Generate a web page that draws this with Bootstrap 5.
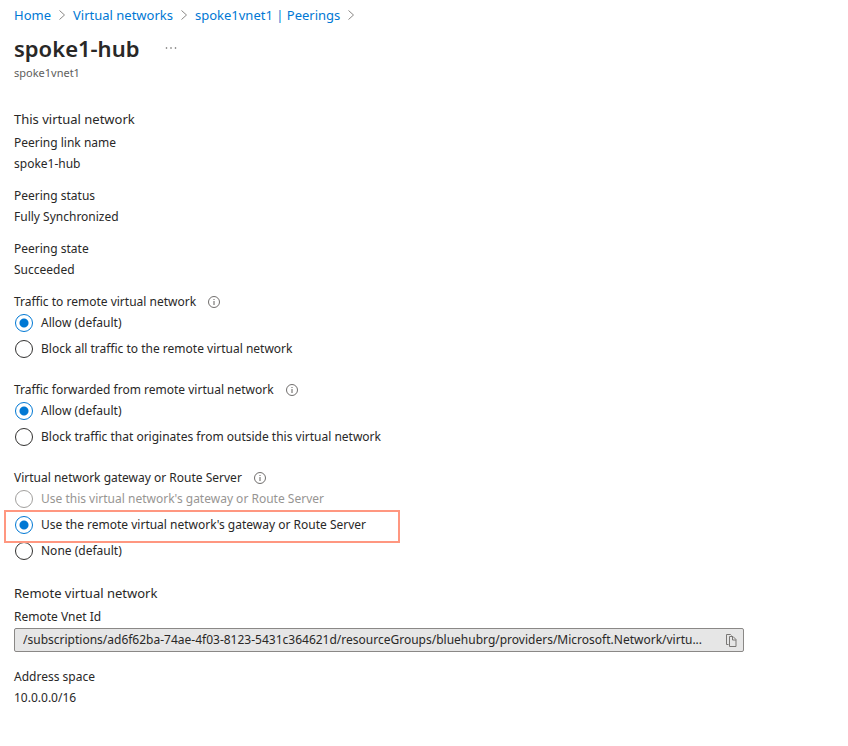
<!DOCTYPE html>
<html lang="en">
<head>
<meta charset="utf-8">
<meta name="viewport" content="width=device-width, initial-scale=1">
<title>spoke1-hub</title>
<link href="https://cdn.jsdelivr.net/npm/bootstrap@5.3.0/dist/css/bootstrap.min.css" rel="stylesheet">
<style>
  body { font-family: "Segoe UI", "Noto Sans", "Open Sans", sans-serif; font-size: 12px; line-height: 21px; color: #292827; background: #fff; }
  .page { padding: 5px 14px 32px; }
  .crumbs { --bs-breadcrumb-margin-bottom: 0; font-size: 13px; gap: 7px; line-height: 20px; }
  .crumbs a { color: #0078d4; text-decoration: none; }
  .crumbs a:hover { text-decoration: underline; }
  .crumbs li { gap: 7px; }
  .crumbs svg { color: #8a8886; }
  .title-row { gap: 26px; margin-top: 7px; }
  .page-title { font-size: 22px; line-height: 32px; font-weight: 600; }
  .more { color: #605e5c; line-height: 0; }
  .subtitle { font-size: 11px; line-height: 16px; color: #605e5c; margin-top: 1px; }
  .section-title { font-size: 13px; line-height: 25px; font-weight: 400; margin: 0; }
  .overview { margin-top: 26px; }
  .pair { margin-bottom: 11px; }
  .choices { margin-bottom: 20px; }
  .choices legend { font-size: 12px; line-height: 21px; gap: 12px; }
  .choices legend svg { color: #605e5c; }
  .option { gap: 8px; margin-bottom: 5px; width: fit-content; }
  .option:last-child { margin-bottom: 0; }
  .option .form-check-input { width: 18px; height: 18px; margin: 0 0 0 1px; border: 1px solid #323130; background-color: #fff; }
  .option .form-check-input:checked { border-color: #0078d4; background-image: radial-gradient(circle, #0078d4 4px, transparent 5px); }
  .option .form-check-input:disabled { border-color: #a19f9d; opacity: 1; }
  .option .form-check-input:disabled ~ label { color: #979593; opacity: 1; }
  .marked::after { content: ""; position: absolute; inset: -4px -34px -8px -10px; border: 2px solid #ff9780; pointer-events: none; }
  .id-field { max-width: 730px; height: 24px; margin: 1px 0 14px; padding: 0 6px 0 8px; gap: 6px; border: 1px solid #8a8886; border-radius: 2px; background: #e6e6e6; }
  .id-field input { min-width: 0; font-size: 12px; line-height: 20px; color: inherit; text-overflow: ellipsis; outline-offset: 1px; }
  .id-field button { color: #797775; line-height: 0; }
</style>
<script src="https://cdn.jsdelivr.net/npm/bootstrap@5.3.0/dist/js/bootstrap.bundle.min.js"></script>
</head>
<body>
<svg class="d-none" aria-hidden="true">
  <symbol id="chevron" viewBox="0 0 8 12"><path d="M1.5 1.500 6.500 6l-5 4.500" fill="none" stroke="currentColor"/></symbol>
  <symbol id="info" viewBox="0 0 12 12"><circle cx="6" cy="6" r="5.5" fill="none" stroke="currentColor" stroke-width=".9"/><path d="M6 5v4M6 3v1" stroke="currentColor" fill="none"/></symbol>
</svg>
<main class="page">
  <nav aria-label="Breadcrumb">
    <ol class="breadcrumb crumbs">
      <li class="d-flex align-items-center"><a href="#">Home</a><svg width="8" height="12"><use href="#chevron"/></svg></li>
      <li class="d-flex align-items-center"><a href="#">Virtual networks</a><svg width="8" height="12"><use href="#chevron"/></svg></li>
      <li class="d-flex align-items-center"><a href="#">spoke1vnet1 | Peerings</a><svg width="8" height="12"><use href="#chevron"/></svg></li>
    </ol>
  </nav>
  <header>
    <div class="title-row d-flex align-items-center">
      <h1 class="page-title mb-0">spoke1-hub</h1>
      <button type="button" class="more border-0 bg-transparent p-0" aria-label="More options">
        <svg width="12" height="4" viewBox="0 0 12 4" fill="currentColor"><circle cx="1.500" cy="2" r=".8"/><circle cx="6" cy="2" r=".8"/><circle cx="10.500" cy="2" r=".8"/></svg>
      </button>
    </div>
    <div class="subtitle">spoke1vnet1</div>
  </header>

  <section class="overview">
    <h2 class="section-title">This virtual network</h2>
    <dl class="mb-0">
      <div class="pair"><dt class="fw-normal">Peering link name</dt><dd class="mb-0">spoke1-hub</dd></div>
      <div class="pair"><dt class="fw-normal">Peering status</dt><dd class="mb-0">Fully Synchronized</dd></div>
      <div class="pair"><dt class="fw-normal">Peering state</dt><dd class="mb-0">Succeeded</dd></div>
    </dl>
    <fieldset class="choices">
      <legend class="d-flex align-items-center mb-0">Traffic to remote virtual network <svg width="12" height="12"><use href="#info"/></svg></legend>
      <div class="option d-flex align-items-center"><input class="form-check-input" type="radio" name="traffic" id="t1" checked><label for="t1">Allow (default)</label></div>
      <div class="option d-flex align-items-center"><input class="form-check-input" type="radio" name="traffic" id="t2"><label for="t2">Block all traffic to the remote virtual network</label></div>
    </fieldset>
    <fieldset class="choices">
      <legend class="d-flex align-items-center mb-0">Traffic forwarded from remote virtual network <svg width="12" height="12"><use href="#info"/></svg></legend>
      <div class="option d-flex align-items-center"><input class="form-check-input" type="radio" name="forwarded" id="f1" checked><label for="f1">Allow (default)</label></div>
      <div class="option d-flex align-items-center"><input class="form-check-input" type="radio" name="forwarded" id="f2"><label for="f2">Block traffic that originates from outside this virtual network</label></div>
    </fieldset>
    <fieldset class="choices">
      <legend class="d-flex align-items-center mb-0">Virtual network gateway or Route Server <svg width="12" height="12"><use href="#info"/></svg></legend>
      <div class="option d-flex align-items-center"><input class="form-check-input" type="radio" name="gateway" id="g1" disabled><label for="g1">Use this virtual network's gateway or Route Server</label></div>
      <div class="option marked position-relative d-flex align-items-center"><input class="form-check-input" type="radio" name="gateway" id="g2" checked><label for="g2">Use the remote virtual network's gateway or Route Server</label></div>
      <div class="option d-flex align-items-center"><input class="form-check-input" type="radio" name="gateway" id="g3"><label for="g3">None (default)</label></div>
    </fieldset>
  </section>

  <section>
    <h2 class="section-title">Remote virtual network</h2>
    <label class="d-block" for="vnet-id">Remote Vnet Id</label>
    <div class="id-field d-flex align-items-center">
      <input class="flex-grow-1 border-0 bg-transparent p-0" type="text" id="vnet-id" readonly value="/subscriptions/ad6f62ba-74ae-4f03-8123-5431c364621d/resourceGroups/bluehubrg/providers/Microsoft.Network/virtu...">
      <button type="button" class="border-0 bg-transparent p-0" aria-label="Copy to clipboard">
        <svg width="12" height="13" viewBox="0 0 12 13" fill="none" stroke="currentColor"><path d="M3.500 10.500h-2V.5h4l1 1M4.500 2.500h3.500l3 3v7H4.500zM7.500 2.500v3.500H11"/></svg>
      </button>
    </div>
    <dl class="mb-0"><dt class="fw-normal">Address space</dt><dd class="mb-0">10.0.0.0/16</dd></dl>
  </section>
</main>
</body>
</html>
